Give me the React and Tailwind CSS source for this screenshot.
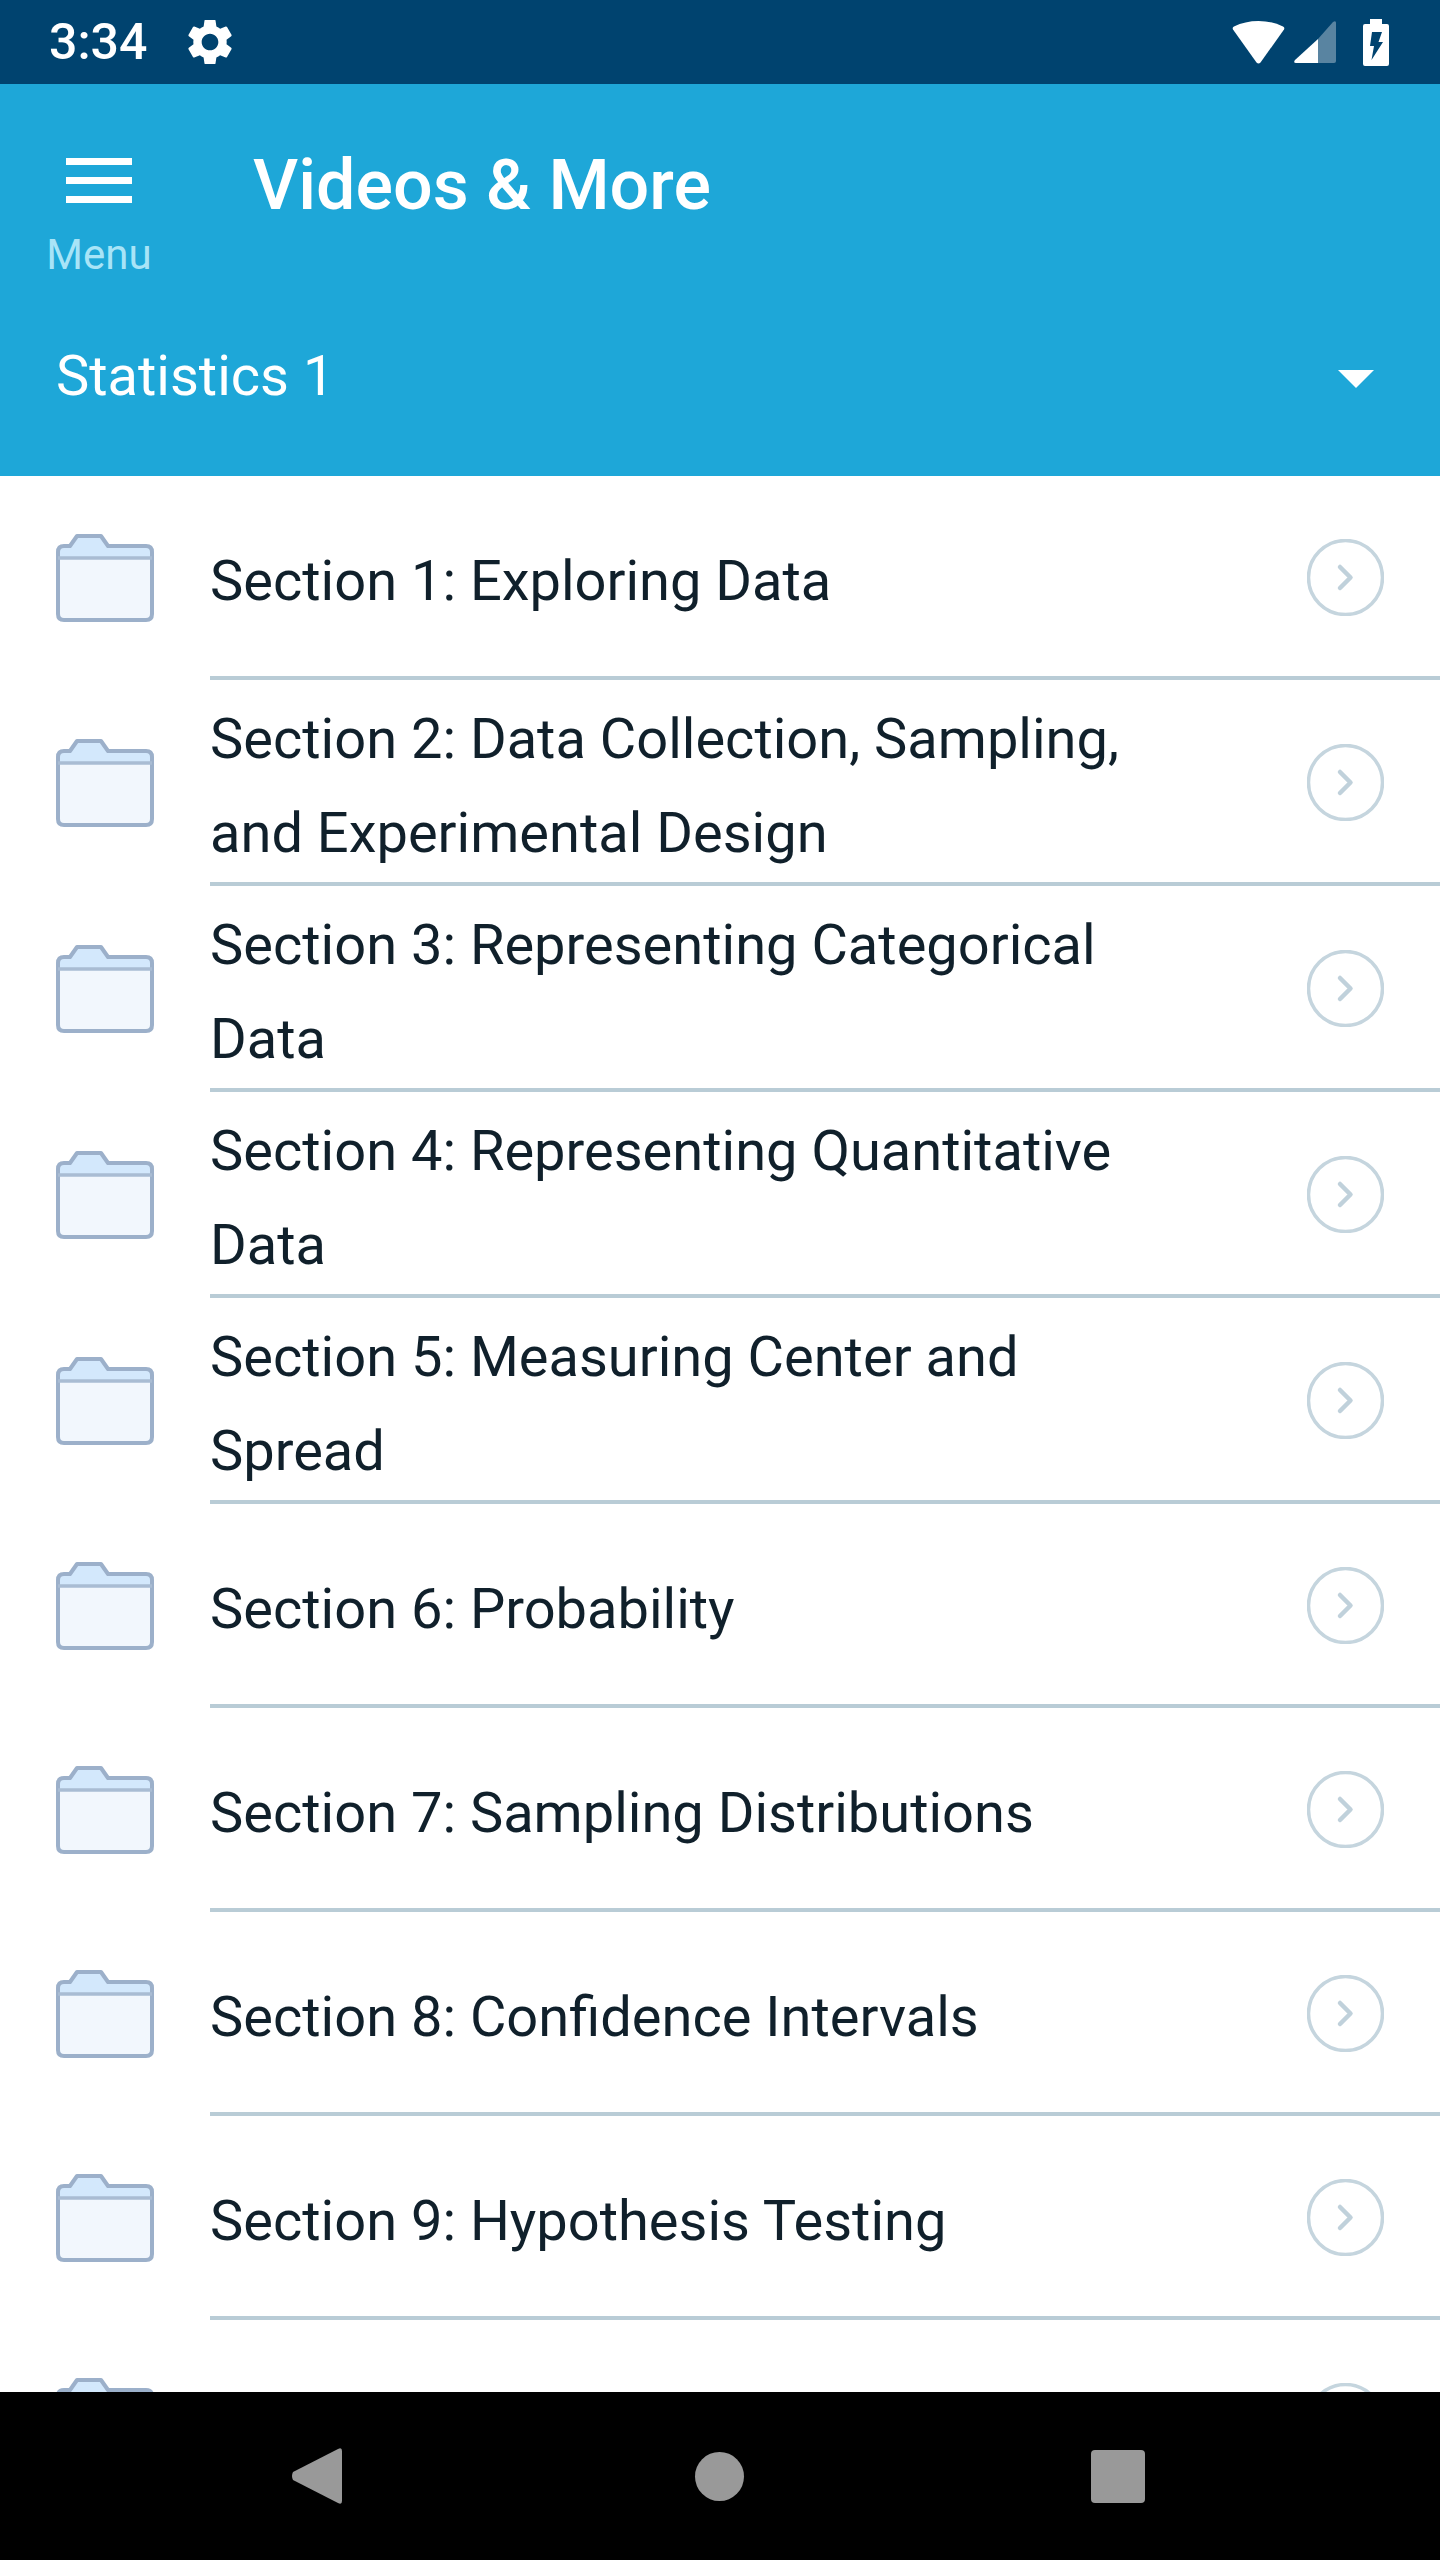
const sections = [
  { label: 'Section 1: Exploring Data' },
  { label: 'Section 2: Data Collection, Sampling, and Experimental Design', tall: true },
  { label: 'Section 3: Representing Categorical Data', tall: true },
  { label: 'Section 4: Representing Quantitative Data', tall: true },
  { label: 'Section 5: Measuring Center and Spread', tall: true },
  { label: 'Section 6: Probability' },
  { label: 'Section 7: Sampling Distributions' },
  { label: 'Section 8: Confidence Intervals' },
  { label: 'Section 9: Hypothesis Testing' },
  { label: '' },
]

function FolderIcon() {
  return (
    <svg width="98" height="88" viewBox="0 0 98 88" className="shrink-0">
      <path d="M2 24 Q2 12 12 12 L14 12 L21 2 L44 2 L52 12 L90 12 Q96 12 96 18 L96 24 Z" fill="#d3e8fc" />
      <rect x="2" y="23" width="94" height="63" rx="5" fill="#f2f7fd" />
      <path
        d="M2 24 L2 80 Q2 86 8 86 L90 86 Q96 86 96 80 L96 18 Q96 12 90 12 L52 12 L45 2 L21 2 L14 12 L8 12 Q2 12 2 18 Z"
        fill="none"
        stroke="#9cb0ca"
        strokeWidth="4"
        strokeLinejoin="round"
      />
      <path d="M2 24 L96 24" fill="none" stroke="#a9bcd3" strokeWidth="3.5" />
    </svg>
  )
}

function ChevronCircle() {
  return (
    <svg width="77" height="77" viewBox="0 0 77 77" className="mt-[3px] shrink-0">
      <circle cx="38.5" cy="38.5" r="37" fill="none" stroke="#c5d5de" strokeWidth="3.5" />
      <path d="M33 28 L43.5 38.5 L33 49" fill="none" stroke="#c0d1db" strokeWidth="4.5" strokeLinecap="round" strokeLinejoin="round" />
    </svg>
  )
}

function StatusBar() {
  return (
    <div className="flex h-[84px] shrink-0 items-center justify-between bg-[#00436f] pl-[49px] pr-[51px] text-white">
      <div className="flex items-center">
        <span className="text-[50px] leading-[60px] font-medium">3:34</span>
        <svg viewBox="2.5 2.5 19 19" className="ml-[41px] h-[44px] w-[44px] fill-white">
          <path d="M19.14 12.94c.04-.3.06-.61.06-.94 0-.32-.02-.64-.07-.94l2.03-1.58c.18-.14.23-.41.12-.61l-1.92-3.32c-.12-.22-.37-.29-.59-.22l-2.39.96c-.5-.38-1.03-.7-1.62-.94l-.36-2.54c-.04-.24-.24-.41-.48-.41h-3.84c-.24 0-.43.17-.47.41l-.36 2.54c-.59.24-1.13.57-1.62.94l-2.39-.96c-.22-.08-.47 0-.59.22L2.74 8.87c-.12.21-.08.47.12.61l2.03 1.58c-.05.3-.09.63-.09.94s.02.64.07.94l-2.03 1.58c-.18.14-.23.41-.12.61l1.92 3.32c.12.22.37.29.59.22l2.39-.96c.5.38 1.03.7 1.62.94l.36 2.54c.05.24.24.41.48.41h3.84c.24 0 .44-.17.47-.41l.36-2.54c.59-.24 1.13-.56 1.62-.94l2.39.96c.22.08.47 0 .59-.22l1.92-3.32c.12-.22.07-.47-.12-.61l-2.01-1.58zM12 15.6c-1.98 0-3.6-1.62-3.6-3.6s1.62-3.6 3.6-3.6 3.6 1.62 3.6 3.6-1.62 3.6-3.6 3.6z" />
        </svg>
      </div>
      <div className="flex items-center">
        <svg width="53" height="43" viewBox="0 0 53 43">
          <path d="M1 8.5 Q0 6.5 2 5.5 Q13 0 26.5 0 Q40 0 51 5.5 Q53 6.5 52 8.5 L28.5 41.5 Q26.5 43.5 24.5 41.5 Z" fill="#fff" />
        </svg>
        <svg width="42" height="42" viewBox="0 0 42 42" className="ml-[9px]">
          <path d="M24 18 L39 1 Q42 -1 42 2 L42 40 Q42 42 40 42 L24 42 Z" fill="#fff" fillOpacity="0.35" />
          <path d="M24 18 L24 42 L2 42 Q-1 42 1 39 Z" fill="#fff" />
        </svg>
        <svg width="26" height="47" viewBox="0 0 26 47" className="ml-[27px]">
          <path d="M7 0 L19 0 L19 5 L24 5 Q26 5 26 7 L26 45 Q26 47 24 47 L2 47 Q0 47 0 45 L0 7 Q0 5 2 5 L7 5 Z" fill="#fff" />
          <path d="M9 13 L19 13 L15.5 23 L20 23 L8.5 41 L11 27 L7 27 Z" fill="#00436f" />
        </svg>
      </div>
    </div>
  )
}

function Header() {
  return (
    <div className="h-[392px] shrink-0 bg-[#1ea7d8] pt-[74px] text-white">
      <div className="flex pl-[47px]">
        <div className="flex w-[104px] flex-col items-center">
          <div className="flex w-[66px] flex-col gap-[12px]">
            <div className="h-[7px] bg-white" />
            <div className="h-[7px] bg-white" />
            <div className="h-[7px] bg-white" />
          </div>
          <span className="mt-[28px] text-[42px] leading-[48px] text-[#a8e4f7]">Menu</span>
        </div>
        <span className="mt-[2px] ml-[102px] text-[70px] leading-[50px] font-medium">Videos &amp; More</span>
      </div>
      <div className="mt-[67px] flex items-center justify-between pl-[56px] pr-[66px]">
        <span className="text-[56px] leading-[60px]">Statistics 1</span>
        <div className="mt-[5px] h-0 w-0 border-x-[18px] border-t-[18px] border-x-transparent border-t-white" />
      </div>
    </div>
  )
}

function SectionRow({ label, tall }) {
  return (
    <div className={`flex items-center pl-[56px] ${tall ? 'h-[206px]' : 'h-[204px]'}`}>
      <FolderIcon />
      <div className="ml-[56px] flex h-full flex-1 items-center justify-between border-b-[4px] border-[#b9ccd6] pr-[56px]">
        <span className="mt-[9px] w-[950px] text-[56px] leading-[94px] text-[#10202b]">{label}</span>
        <ChevronCircle />
      </div>
    </div>
  )
}

function NavBar() {
  return (
    <div className="flex h-[168px] shrink-0 items-center bg-black">
      <svg width="50" height="56" viewBox="0 0 50 56" className="ml-[292px] fill-[#999]">
        <path d="M1 24 L46 1 Q50 -1 50 3 L50 53 Q50 57 46 55 L1 32 Q-1 28 1 24 Z" />
      </svg>
      <div className="ml-[353px] h-[49px] w-[49px] rounded-full bg-[#999]" />
      <div className="ml-[347px] h-[53px] w-[54px] rounded-[4px] bg-[#999]" />
    </div>
  )
}

export default function App() {
  return (
    <div className="flex h-[2560px] w-[1440px] flex-col overflow-hidden bg-white font-['Roboto',sans-serif]">
      <StatusBar />
      <Header />
      <div className="flex-1 overflow-hidden">
        {sections.map((s, i) => (
          <SectionRow key={i} label={s.label} tall={s.tall} />
        ))}
      </div>
      <NavBar />
    </div>
  )
}
